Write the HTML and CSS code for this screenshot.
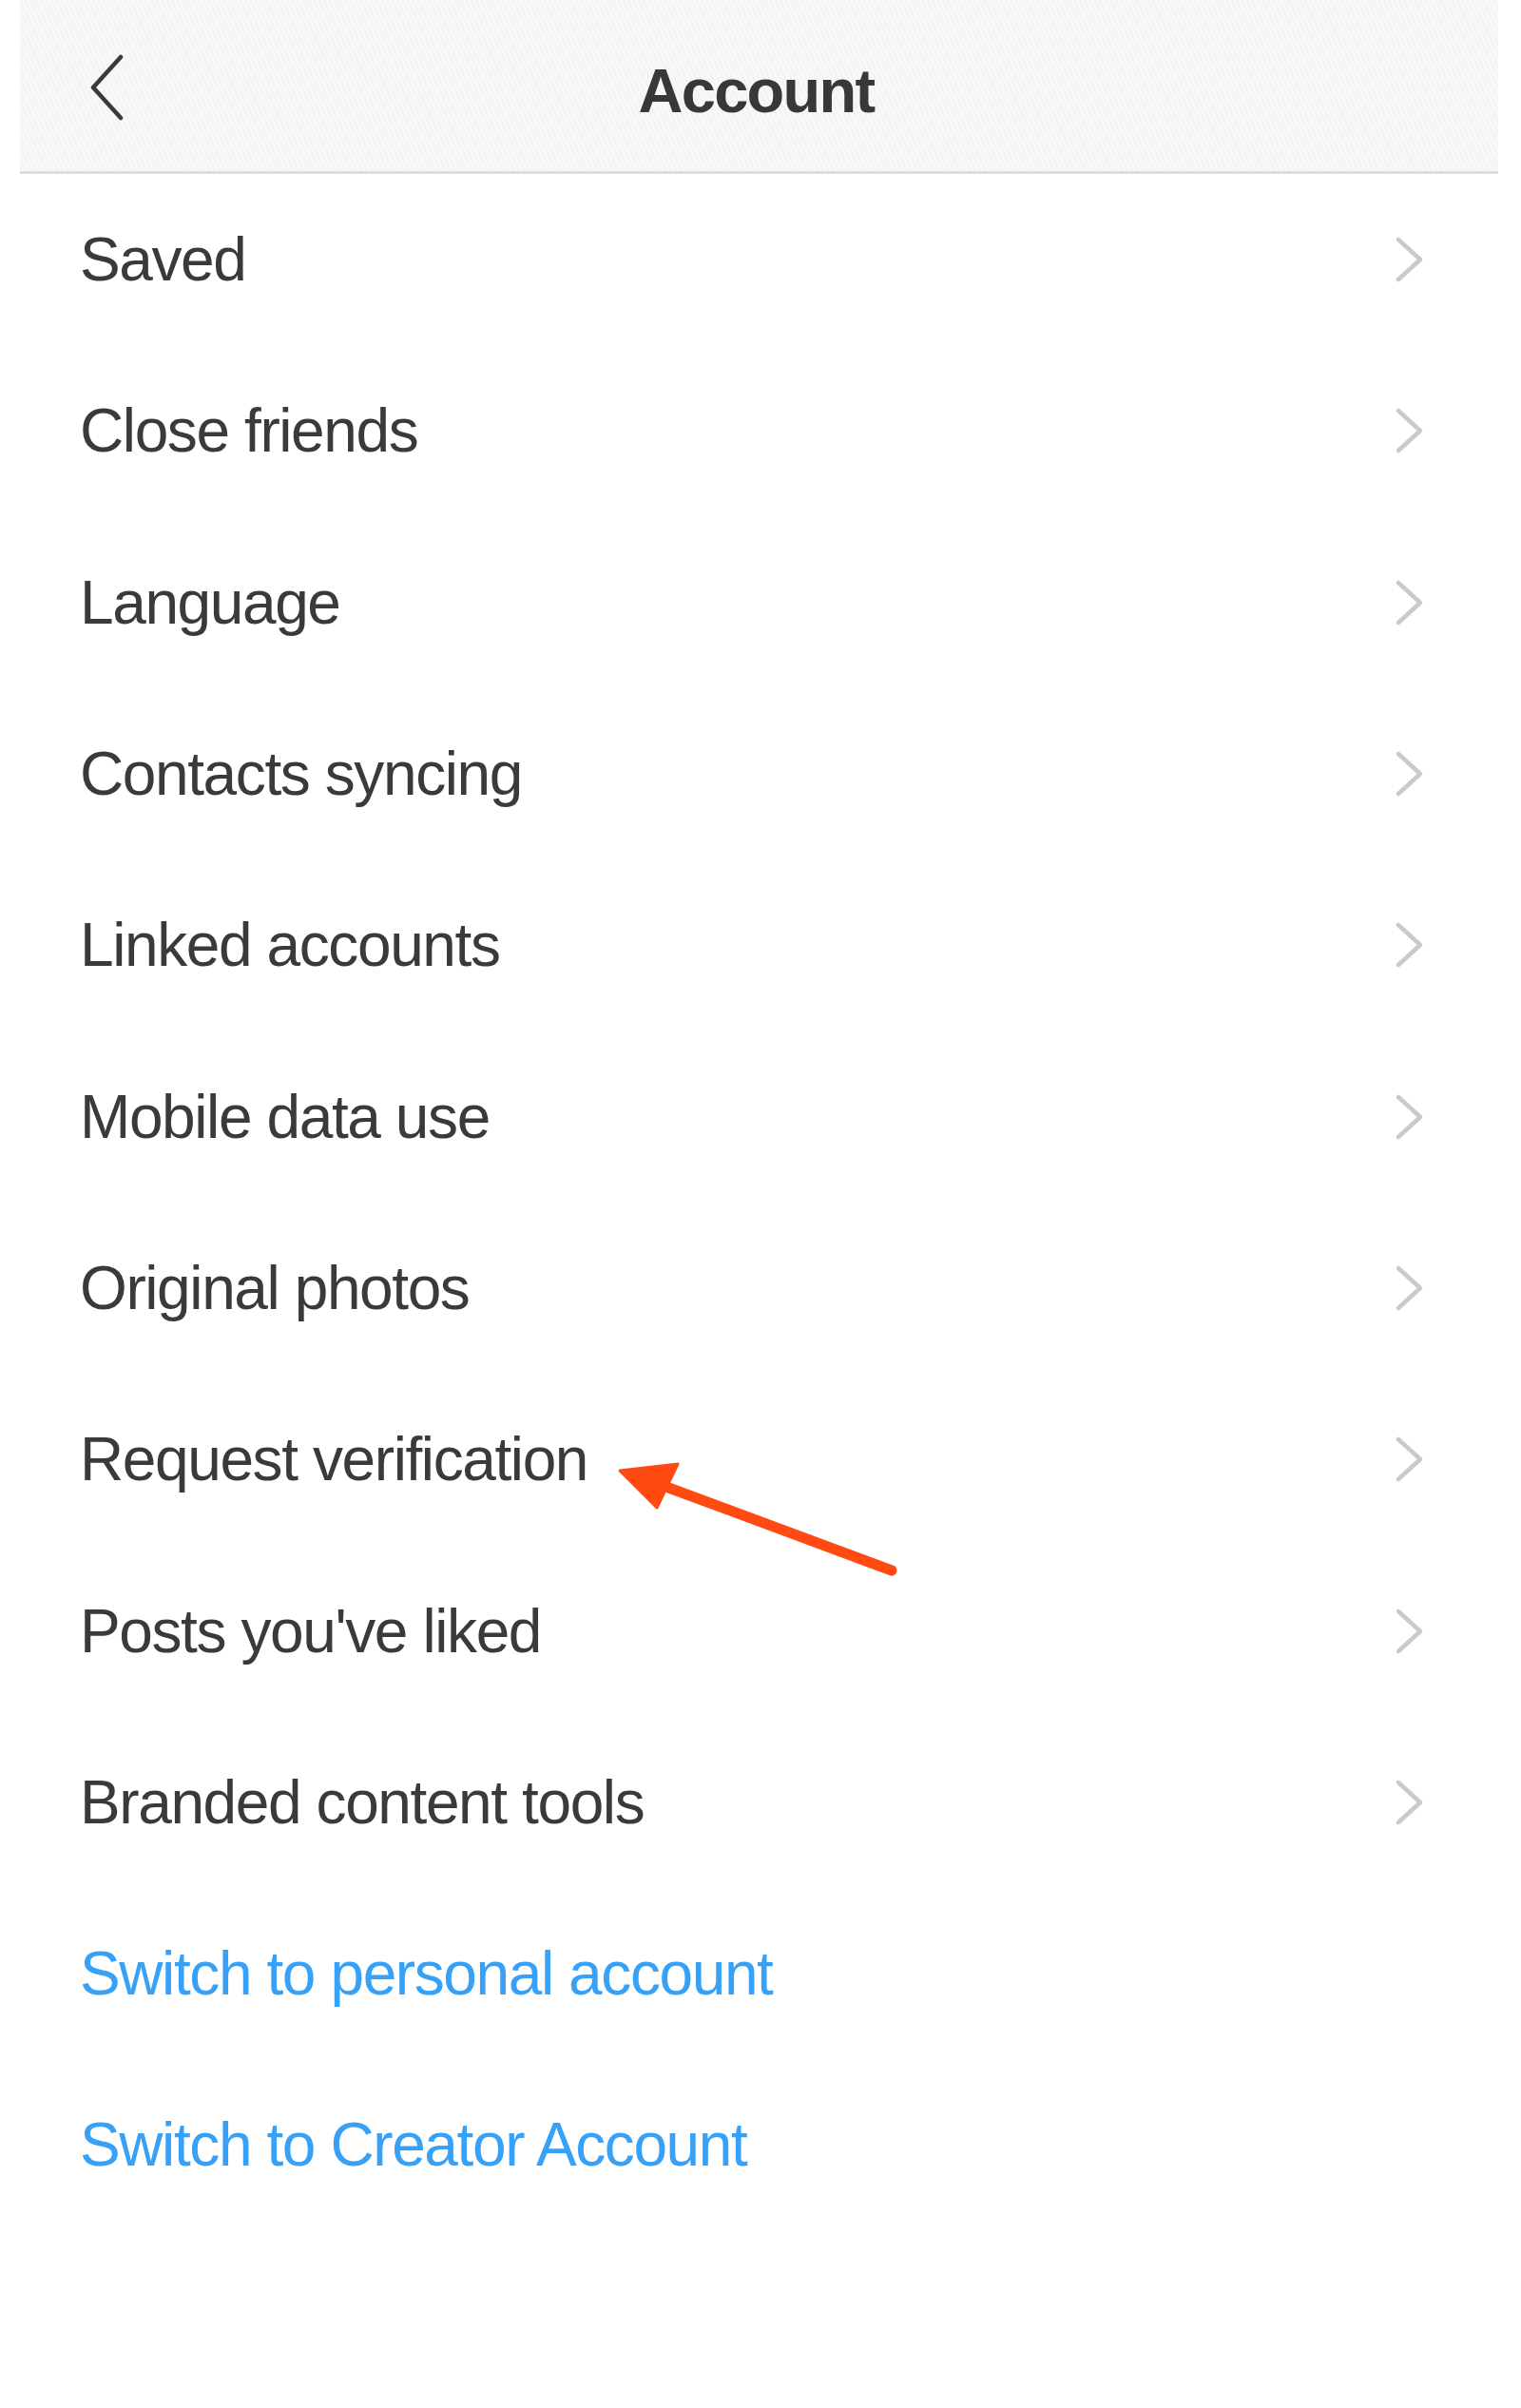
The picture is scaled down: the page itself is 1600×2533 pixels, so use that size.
FILE: index.html
```html
<!DOCTYPE html>
<html lang="en">
<head>
    <meta charset="UTF-8">
    <meta name="viewport" content="width=device-width, initial-scale=1.0">
    <title>Account</title>
    <link rel="stylesheet" href="styles.css">
</head>
<body>
    <div class="screen">
        <header class="topbar">
            <button class="back" aria-label="Back">
                <svg width="40" height="70" viewBox="0 0 40 70">
                    <polyline points="35,3 6,35 35,67" fill="none" stroke="#3a3a3a" stroke-width="4.5" stroke-linecap="round" stroke-linejoin="round"/>
                </svg>
            </button>
            <h1>Account</h1>
            <span></span>
        </header>

        <ul class="menu">
            <li class="item"><span>Saved</span><svg class="chev" width="32" height="50" viewBox="0 0 32 50"><polyline points="4,4 27,25 4,46"/></svg></li>
            <li class="item"><span>Close friends</span><svg class="chev" width="32" height="50" viewBox="0 0 32 50"><polyline points="4,4 27,25 4,46"/></svg></li>
            <li class="item"><span>Language</span><svg class="chev" width="32" height="50" viewBox="0 0 32 50"><polyline points="4,4 27,25 4,46"/></svg></li>
            <li class="item"><span>Contacts syncing</span><svg class="chev" width="32" height="50" viewBox="0 0 32 50"><polyline points="4,4 27,25 4,46"/></svg></li>
            <li class="item"><span>Linked accounts</span><svg class="chev" width="32" height="50" viewBox="0 0 32 50"><polyline points="4,4 27,25 4,46"/></svg></li>
            <li class="item"><span>Mobile data use</span><svg class="chev" width="32" height="50" viewBox="0 0 32 50"><polyline points="4,4 27,25 4,46"/></svg></li>
            <li class="item"><span>Original photos</span><svg class="chev" width="32" height="50" viewBox="0 0 32 50"><polyline points="4,4 27,25 4,46"/></svg></li>
            <li class="item"><span>Request verification</span><svg class="chev" width="32" height="50" viewBox="0 0 32 50"><polyline points="4,4 27,25 4,46"/></svg></li>
            <li class="item"><span>Posts you've liked</span><svg class="chev" width="32" height="50" viewBox="0 0 32 50"><polyline points="4,4 27,25 4,46"/></svg></li>
            <li class="item"><span>Branded content tools</span><svg class="chev" width="32" height="50" viewBox="0 0 32 50"><polyline points="4,4 27,25 4,46"/></svg></li>
            <li class="item link"><span>Switch to personal account</span></li>
            <li class="item link"><span>Switch to Creator Account</span></li>
        </ul>

        <!-- pointer to the verification entry -->
        <svg class="pointer" width="310" height="135" viewBox="0 0 310 135">
            <line x1="58" y1="33" x2="298" y2="122" stroke="#ff4a12" stroke-width="11" stroke-linecap="round"/>
            <polygon points="12,17 73,10 51,56" fill="#ff4a12" stroke="#ff4a12" stroke-width="3" stroke-linejoin="round"/>
        </svg>
    </div>
</body>
</html>
```

FILE: styles.css
```css
body {
    margin: 0;
    background: #fff;
    font-family: "Liberation Sans", Arial, sans-serif;
    color: #3a3a3a;
}
.screen {
    position: relative;
    margin: 0 24px 0 21px;
}
.topbar {
    display: grid;
    grid-template-columns: 1fr auto 1fr;
    align-items: center;
    height: 180px;
    border-bottom: 3px solid #dcdde0;
    background-color: #f7f8fa;
    background-image: repeating-linear-gradient(65deg, rgba(0,0,0,0.018) 0 2px, transparent 2px 5px);
}
.back {
    justify-self: start;
    margin-left: 71px;
    margin-top: 4px;
    padding: 0;
    border: none;
    background: none;
    display: flex;
}
.topbar h1 {
    margin: 10px 0 0 -6px;
    font-size: 65px;
    font-weight: bold;
    letter-spacing: -1.7px;
    color: #383838;
}
.menu {
    list-style: none;
    margin: 0;
    padding: 0;
}
.item {
    display: flex;
    align-items: center;
    justify-content: space-between;
    height: 180.3px;
    padding: 0 77px 0 63px;
    font-size: 64px;
    letter-spacing: -1.4px;
}
.chev {
    fill: none;
    stroke: #cacacd;
    stroke-width: 4.5;
    stroke-linecap: round;
    stroke-linejoin: round;
}
.link {
    color: #37a1f8;
}
.pointer {
    position: absolute;
    left: 619px;
    top: 1530px;
}
```
